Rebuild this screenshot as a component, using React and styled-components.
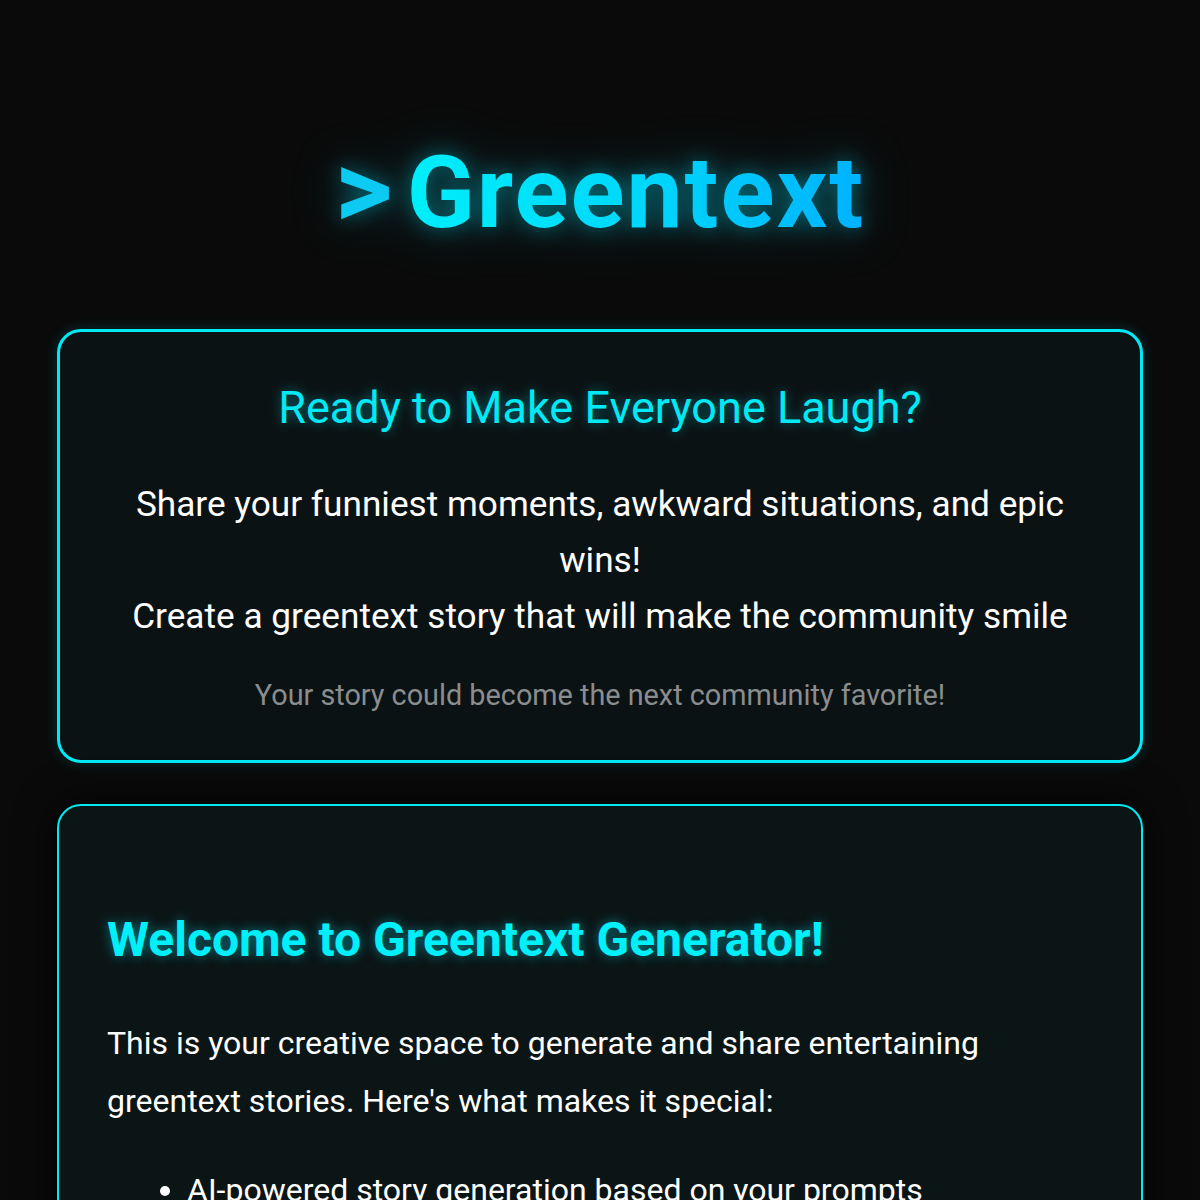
import React from "react";
import styled, { createGlobalStyle } from "styled-components";

const GlobalStyle = createGlobalStyle`
  * { box-sizing: border-box; }
  body {
    margin: 0;
    background-color: #0a0a0a;
    font-family: Roboto, "Liberation Sans", sans-serif;
    color: #fff;
  }
`;

const Page = styled.div`
  min-height: 100vh;
  padding: 133px 57px 60px;
  display: flex;
  flex-direction: column;
  gap: 41px;
`;

const Header = styled.header`
  display: flex;
  justify-content: center;
  margin-bottom: 35px;
`;

const Logo = styled.h1`
  margin: 0;
  display: flex;
  align-items: baseline;
  font-size: 100px;
  font-weight: 700;
  line-height: 1.2;
  letter-spacing: 2px;
  filter: drop-shadow(0 0 10px rgba(0, 220, 240, 0.4))
    drop-shadow(0 0 24px rgba(0, 190, 220, 0.3));
`;

const Caret = styled.span`
  font-size: 112px;
  line-height: 1;
  color: #0ccaf2;
  margin-right: 12px;
`;

const GradientText = styled.span`
  background: linear-gradient(90deg, #00eefa 0%, #00d8fb 50%, #00b2ff 100%);
  -webkit-background-clip: text;
  background-clip: text;
  -webkit-text-fill-color: transparent;
`;

const Card = styled.section`
  border: ${(p) => (p.$thick ? "3px" : "2px")} solid #00eaf6;
  border-radius: 24px;
  background: ${(p) => (p.$thick ? "#0b1214" : "#0b1516")};
  box-shadow: 0 0 ${(p) => (p.$thick ? "14px rgba(0, 230, 245, 0.18)" : "40px rgba(0, 0, 0, 0.8)")};
  padding: ${(p) => (p.$thick ? "49px 48px 43px" : "105px 48px 48px")};
  text-align: ${(p) => (p.$thick ? "center" : "left")};
`;

const CardTitle = styled.h2`
  margin: 0 0 41px;
  font-size: 45px;
  font-weight: 400;
  line-height: 1.2;
  color: #00eaf6;
  text-shadow: 0 0 12px rgba(0, 230, 245, 0.45);
`;

const Lead = styled.p`
  margin: 0 auto 30px;
  font-size: 35.2px;
  line-height: 56px;
  color: #fff;
`;

const Muted = styled.p`
  margin: 0;
  font-size: 28.8px;
  line-height: 43px;
  color: #8a8d8e;
`;

const WelcomeTitle = styled.h2`
  margin: 0 0 45px;
  font-size: 48px;
  font-weight: 700;
  line-height: 1.2;
  color: #00f0fa;
  text-shadow: 0 0 12px rgba(0, 230, 245, 0.5);
`;

const Body = styled.p`
  margin: 0 0 31px;
  font-size: 32px;
  line-height: 58px;
  color: #fff;
`;

const List = styled.ul`
  margin: 0;
  padding-left: 80px;
  font-size: 32px;
  line-height: 58px;
`;

export default function App() {
  return (
    <>
      <GlobalStyle />
      <Page>
        <Header>
          <Logo>
            <Caret>&gt;</Caret>
            <GradientText>Greentext</GradientText>
          </Logo>
        </Header>

        <Card $thick>
          <CardTitle>Ready to Make Everyone Laugh?</CardTitle>
          <Lead>
            Share your funniest moments, awkward situations, and epic wins!
            <br />
            Create a greentext story that will make the community smile
          </Lead>
          <Muted>Your story could become the next community favorite!</Muted>
        </Card>

        <Card>
          <WelcomeTitle>Welcome to Greentext Generator!</WelcomeTitle>
          <Body>
            This is your creative space to generate and share entertaining
            greentext stories. Here's what makes it special:
          </Body>
          <List>
            <li>AI-powered story generation based on your prompts</li>
            <li>Share your stories with the community</li>
            <li>Vote on your favorite greentexts</li>
          </List>
        </Card>
      </Page>
    </>
  );
}
